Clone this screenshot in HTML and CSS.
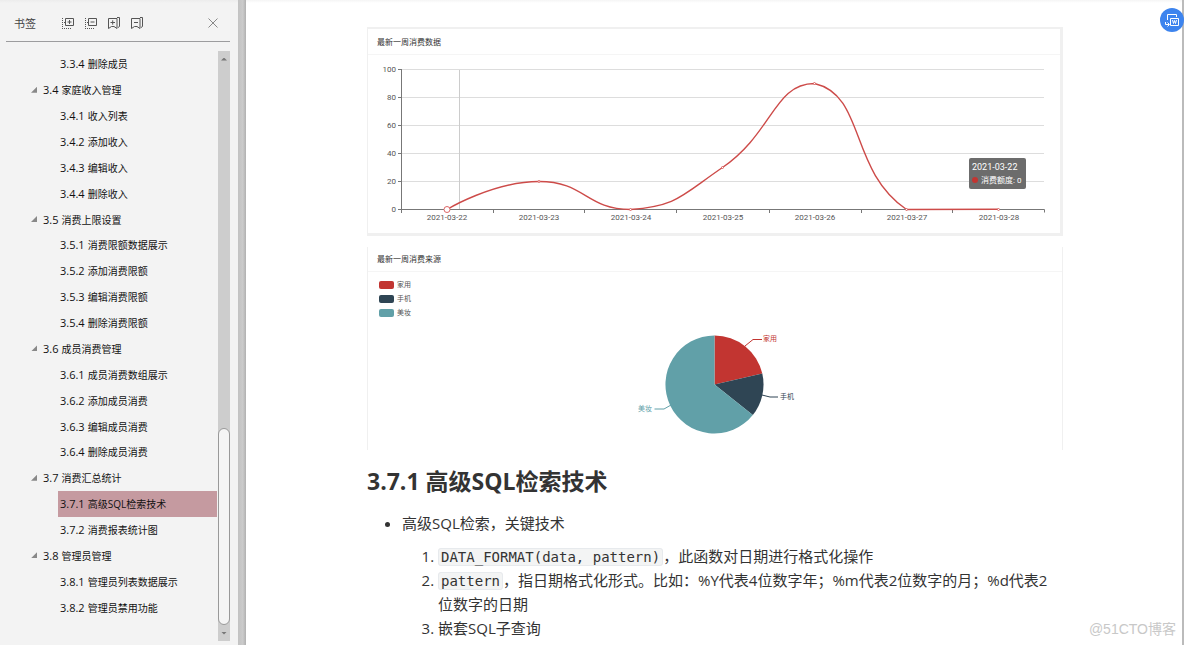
FILE: index.html
```html
<!DOCTYPE html>
<html lang="zh-CN">
<head>
<meta charset="utf-8">
<title>3.7.1 高级SQL检索技术</title>
<link rel="stylesheet" href="styles.css">
</head>
<body>
<aside class="sidebar">
  <header class="toolbar">
    <h1 class="toolbar-title">书签</h1>
    <button class="tool" aria-label="展开全部"><svg viewBox="0 0 12 12"><path d="M.5 1v11M2 5.500h2M2 11.500h7" stroke-dasharray="1 1"/><path d="M3.500 1.500h8v7h-8zM5.500 5h4M7.500 3v4"/></svg></button>
    <button class="tool" aria-label="折叠全部"><svg viewBox="0 0 12 12"><path d="M.5 1v11M2 5.500h2M2 11.500h7" stroke-dasharray="1 1"/><path d="M3.500 1.500h8v7h-8zM5.500 5h4"/></svg></button>
    <button class="tool" aria-label="添加书签"><svg viewBox="0 0 12 12"><path d="M.5 1.500h8.500v10l-3-2h-2.500l-3 2zM2.500 5.500h4.500M4.700 3.300v4.400M9 .5h2.500v9l-1.500 1"/></svg></button>
    <button class="tool" aria-label="删除书签"><svg viewBox="0 0 12 12"><path d="M.5 1.500h8.500v10l-3-2h-2.500l-3 2zM3 5.500h4M9 .5h2.500v9l-1.500 1"/></svg></button>
    <button class="tool close" aria-label="关闭"><svg viewBox="0 0 12 12"><path d="M1.500 1.500l9 9M10.500 1.500l-9 9"/></svg></button>
  </header>
  <div class="outline">
    <nav class="tree">
      <a class="leaf" href="#"><span class="num">3.3.4</span>删除成员</a>
      <a class="branch" href="#"><span class="num">3.4</span>家庭收入管理</a>
      <a class="leaf" href="#"><span class="num">3.4.1</span>收入列表</a>
      <a class="leaf" href="#"><span class="num">3.4.2</span>添加收入</a>
      <a class="leaf" href="#"><span class="num">3.4.3</span>编辑收入</a>
      <a class="leaf" href="#"><span class="num">3.4.4</span>删除收入</a>
      <a class="branch" href="#"><span class="num">3.5</span>消费上限设置</a>
      <a class="leaf" href="#"><span class="num">3.5.1</span>消费限额数据展示</a>
      <a class="leaf" href="#"><span class="num">3.5.2</span>添加消费限额</a>
      <a class="leaf" href="#"><span class="num">3.5.3</span>编辑消费限额</a>
      <a class="leaf" href="#"><span class="num">3.5.4</span>删除消费限额</a>
      <a class="branch" href="#"><span class="num">3.6</span>成员消费管理</a>
      <a class="leaf" href="#"><span class="num">3.6.1</span>成员消费数组展示</a>
      <a class="leaf" href="#"><span class="num">3.6.2</span>添加成员消费</a>
      <a class="leaf" href="#"><span class="num">3.6.3</span>编辑成员消费</a>
      <a class="leaf" href="#"><span class="num">3.6.4</span>删除成员消费</a>
      <a class="branch" href="#"><span class="num">3.7</span>消费汇总统计</a>
      <a class="leaf current" href="#"><span class="num">3.7.1</span>高级SQL检索技术</a>
      <a class="leaf" href="#"><span class="num">3.7.2</span>消费报表统计图</a>
      <a class="branch" href="#"><span class="num">3.8</span>管理员管理</a>
      <a class="leaf" href="#"><span class="num">3.8.1</span>管理员列表数据展示</a>
      <a class="leaf" href="#"><span class="num">3.8.2</span>管理员禁用功能</a>
    </nav>
    <div class="scrollbar">
      <span class="arrow up"></span>
      <span class="track"></span>
      <span class="thumb"></span>
      <span class="arrow down"></span>
    </div>
  </div>
</aside>
<div class="splitter"></div>
<main class="page">
  <section class="panel line-panel">
    <h3 class="panel-title">最新一周消费数据</h3>
    <svg class="chart" viewBox="368 55 692 178" role="img" aria-label="最新一周消费数据">
      <path class="grid" d="M401 69.500h643M401 97.500h643M401 125.500h643M401 153.500h643M401 181.500h643"/>
      <path class="pointer" d="M459.500 70v139"/>
      <path class="axis" d="M401.500 69v144M398 69.500h4M398 97.500h4M398 125.500h4M398 153.500h4M398 181.500h4M398 209.500h646.500v3M493.500 210v3M584.500 210v3M676.500 210v3M769.500 210v3M861.500 210v3M952.500 210v3"/>
      <g class="labels end">
        <text x="396" y="72">100</text><text x="396" y="100">80</text><text x="396" y="128">60</text><text x="396" y="156">40</text><text x="396" y="184">20</text><text x="396" y="212">0</text>
      </g>
      <g class="labels mid">
        <text x="447" y="220">2021-03-22</text><text x="539" y="220">2021-03-23</text><text x="631" y="220">2021-03-24</text><text x="723" y="220">2021-03-25</text><text x="815" y="220">2021-03-26</text><text x="907" y="220">2021-03-27</text><text x="999" y="220">2021-03-28</text>
      </g>
      <path class="series" d="M447 209.500C447 209.500 493 181.500 539 181.500C585 181.500 586 209.500 630.500 209.500C677.600 205.900 681 195.800 722.500 167.500C773 132.800 774 83.500 814.500 83.500C865.700 95.200 848.600 169.900 906.500 209.500L998.500 209.200"/>
      <g class="dots">
        <circle cx="447" cy="209.500" r="3"/><circle cx="539" cy="181.500" r="1"/><circle cx="630.500" cy="209.500" r="1"/><circle cx="722.500" cy="167.500" r="1"/><circle cx="814.500" cy="83.500" r="1"/><circle cx="906.500" cy="209.500" r="1"/><circle cx="998.500" cy="209.500" r="1"/>
      </g>
      <rect class="tip" x="969" y="158" width="57" height="31" rx="2"/>
      <circle class="red" cx="975" cy="180" r="3"/>
      <text class="tip-date" x="972" y="170">2021-03-22</text>
      <text class="tip-value" x="981" y="183">消费额度: 0</text>
    </svg>
  </section>
  <section class="panel pie-panel">
    <h3 class="panel-title">最新一周消费来源</h3>
    <svg class="chart" viewBox="368 272 694 178" role="img" aria-label="最新一周消费来源">
      <rect class="red" x="379" y="281" width="15" height="8" rx="2"/>
      <rect class="navy" x="379" y="295" width="15" height="8" rx="2"/>
      <rect class="teal" x="379" y="309" width="15" height="8" rx="2"/>
      <g class="labels legend">
        <text x="397" y="287">家用</text><text x="397" y="301">手机</text><text x="397" y="315">美妆</text>
      </g>
      <path class="red" d="M714.500 384.500V335.500A49 49 0 0 1 762.300 373.600z"/>
      <path class="navy" d="M714.500 384.500L762.300 373.600A49 49 0 0 1 752.800 415z"/>
      <path class="teal" d="M714.500 384.500L752.800 415A49 49 0 1 1 714.500 335.500z"/>
      <path class="lead red-line" d="M745 346l8-6.500h9"/>
      <path class="lead navy-line" d="M762 395l8 2h8"/>
      <path class="lead teal-line" d="M671 405l-7 4h-9.500"/>
      <g class="labels">
        <text class="red" x="763" y="341">家用</text><text class="navy" x="780" y="399">手机</text><text class="teal" x="638" y="411">美妆</text>
      </g>
    </svg>
  </section>
  <h2 class="heading">3.7.1 高级SQL检索技术</h2>
  <ul class="points">
    <li>高级SQL检索，关键技术
      <ol class="steps">
        <li><code>DATA_FORMAT(data, pattern)</code>，此函数对日期进行格式化操作</li>
        <li><code>pattern</code>，指日期格式化形式。比如：%Y代表4位数字年；%m代表2位数字的月；%d代表2位数字的日期</li>
        <li>嵌套SQL子查询</li>
      </ol>
    </li>
  </ul>
</main>
<button class="convert" aria-label="转换为Word"><svg viewBox="0 0 24 24"><path d="M7.500 12V6.500h9V9M5.500 14v2.500H9M7.500 14.500l2 2-2 2"/><path class="sheet" d="M10.500 10.500h8v7h-8z"/><path d="M12.500 12l1 3.500 1-3 1 3 1-3.500"/></svg></button>
<div class="watermark">@51CTO博客</div>
</body>
</html>
```
FILE: styles.css
```css
* { box-sizing: border-box; }
body {
  margin: 0;
  display: flex;
  height: 100vh;
  overflow: hidden;
  background: #fff;
  color: #333;
  font-family: "Open Sans", "Noto Sans CJK SC", sans-serif;
}
button { padding: 0; border: 0; background: none; }
svg { display: block; }

.sidebar {
  flex: 0 0 238px;
  display: flex;
  flex-direction: column;
  background: linear-gradient(#ececec, #f3f3f3 3px);
}
.toolbar {
  display: flex;
  align-items: center;
  gap: 11px;
  height: 42px;
  margin: 0 8px 9px 6px;
  padding: 4px 11px 0 8px;
  border-bottom: 1px solid #9c9c9e;
}
.toolbar-title { margin: 0 15px 0 0; font-size: 11px; font-weight: 400; color: #444; }
.tool { width: 12px; height: 12px; }
.tool svg { width: 12px; height: 12px; fill: none; stroke: #555; }
.close { margin-left: auto; }
.close svg { stroke: #888; }
.outline { flex: 1; display: flex; min-height: 0; padding: 0 8px 4px 0; }
.tree {
  flex: 1;
  display: grid;
  grid-auto-rows: 1fr;
  padding: 0 1px 21px 0;
}
.tree a {
  display: flex;
  align-items: center;
  color: #111;
  font-size: 10px;
  text-decoration: none;
  white-space: nowrap;
}
.num { margin-right: 3px; font-size: 11px; }
.leaf { margin-left: 58px; padding-left: 2px; }
.branch { padding-left: 31px; }
.branch::before {
  content: "";
  width: 6px;
  height: 6px;
  margin-right: 6px;
  background: #888;
  clip-path: polygon(100% 0, 100% 100%, 0 100%);
}
.current { background: #c59aa0; }
.scrollbar {
  flex: 0 0 12px;
  display: flex;
  flex-direction: column;
  align-items: center;
  background: #cdcdcd;
}
.track { flex: 362; }
.thumb {
  flex: 195;
  width: 12px;
  border: 1px solid #999;
  border-radius: 6px;
  background: #f5f5f5;
}
.arrow { flex: 0 0 16px; display: flex; align-items: center; }
.arrow::before { content: ""; width: 6px; height: 3px; background: #777; }
.up::before { clip-path: polygon(50% 0, 100% 100%, 0 100%); }
.down::before { clip-path: polygon(0 0, 100% 0, 50% 100%); }

.splitter {
  flex: 0 0 8px;
  background: linear-gradient(90deg, #c2c2c2, #cbcbcb 60%, #b0b0b0);
}
.page {
  flex: 1;
  min-width: 0;
  padding: 27px 119px 0 121px;
  border-right: 2px solid #bbb;
  background: linear-gradient(#f5f5f5, #fff 3px);
}
.panel { border: 0 solid #f0f0f0; }
.line-panel { border-width: 2px 3px 3px 1px; margin-bottom: 11px; }
.pie-panel { border-width: 0 1px; }
.panel-title {
  margin: 0;
  padding-left: 9px;
  border-bottom: 1px solid #f5f5f5;
  font-size: 8px;
  line-height: 25px;
  font-weight: 400;
}
.pie-panel .panel-title { line-height: 24px; }
.chart { width: 100%; height: auto; font-family: Roboto, "Noto Sans CJK SC", sans-serif; }
.grid { stroke: #ddd; }
.pointer { stroke: #ccc; }
.axis { fill: none; stroke: #777; }
.series { fill: none; stroke: #cd4b49; stroke-width: 1.4; }
.dots { fill: #fff; stroke: #d66; }
.labels { font-size: 8px; fill: #555; }
.pie-panel .labels { font-size: 7px; }
.end { text-anchor: end; }
.mid { text-anchor: middle; }
.tip { fill: #6c6c6c; }
.tip-date { font-size: 9px; fill: #fff; }
.tip-value { font-size: 8px; fill: #fff; }
.red { fill: #c23531; }
.navy { fill: #2f4554; }
.teal { fill: #61a0a8; }
.lead { fill: none; }
.red-line { stroke: #c23531; }
.navy-line { stroke: #2f4554; }
.teal-line { stroke: #61a0a8; }

.heading { margin: 15px 0 14px; font-size: 23px; line-height: 32px; font-weight: 700; }
.points, .steps { margin: 0; font-size: 15px; line-height: 24px; }
.points { padding: 0 4px 0 35px; }
.steps { margin-top: 9px; padding-left: 36px; }
code {
  padding: 0 2px;
  border: 1px solid #e7eaed;
  border-radius: 3px;
  background: #f3f4f4;
  font-family: "DejaVu Sans Mono", monospace;
  font-size: 14px;
  line-height: 16px;
}
.convert {
  position: absolute;
  top: 8px;
  right: 0;
  width: 24px;
  height: 24px;
  border-radius: 50%;
  background: #3d84ee;
}
.convert svg { fill: none; stroke: #fff; }
.sheet { fill: #3d84ee; }
.watermark {
  position: absolute;
  right: 8px;
  bottom: 6px;
  color: #c8c8c8;
  font: 14px/20px "Liberation Sans", "Noto Sans CJK SC", sans-serif;
}
```
